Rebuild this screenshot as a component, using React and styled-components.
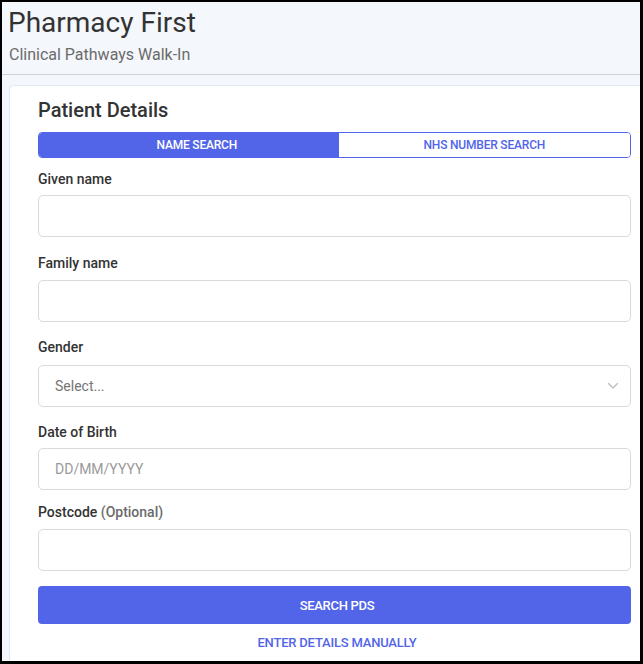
import React from 'react'
import styled, { createGlobalStyle } from 'styled-components'

const GlobalStyle = createGlobalStyle`
  html, body { margin: 0; padding: 0; background: #000; }
  body { font-family: Roboto, 'Noto Sans', Arial, sans-serif; }
  * { box-sizing: border-box; }
`

const BLUE = '#5265e9'

const Frame = styled.div`
  width: 643px;
  height: 664px;
  border-style: solid;
  border-color: #000;
  border-width: 2px 3px 3px 2px;
  background: #f4f7fb;
  overflow: hidden;
  display: flex;
  flex-direction: column;
`

const Header = styled.header`
  padding: 4px 0 0 7px;
  display: flex;
  flex-direction: column;
`

const Title = styled.h1`
  margin: 0 0 0 -1px;
  font-size: 28px;
  line-height: 34px;
  font-weight: 400;
  color: #333;
`

const Subtitle = styled.div`
  margin-top: 5px;
  font-size: 16px;
  line-height: 20px;
  color: #6b6b6b;
`

const Divider = styled.hr`
  margin: 9px 0 0;
  border: 0;
  height: 1px;
  background: #cfd3d8;
`

const Card = styled.section`
  margin: 10px 0 0 7px;
  flex: 1;
  background: #fff;
  border-top: 1px solid #e3e9f1;
  border-left: 1px solid #e3e9f1;
  border-radius: 4px 0 0 0;
  padding: 12px 9px 0 28px;
  display: flex;
  flex-direction: column;
`

const CardTitle = styled.h2`
  margin: 0;
  font-size: 20px;
  line-height: 24px;
  font-weight: 500;
  color: #333;
`

const Tabs = styled.div`
  margin-top: 10px;
  display: flex;
  height: 26px;
  border: 1px solid ${BLUE};
  border-radius: 4px;
  overflow: hidden;
`

const Tab = styled.button`
  flex: ${p => (p.$active ? '0 0 50.7%' : '1 1 0')};
  border: 0;
  margin: 0;
  padding: ${p => (p.$active ? '0 0 0 16px' : '0')};
  font-family: inherit;
  font-size: 12px;
  font-weight: 500;
  letter-spacing: -0.2px;
  text-transform: uppercase;
  background: ${p => (p.$active ? BLUE : '#fff')};
  color: ${p => (p.$active ? '#fff' : BLUE)};
  cursor: pointer;
`

const Field = styled.div`
  margin-top: ${p => p.$mt}px;
  display: flex;
  flex-direction: column;
`

const Label = styled.label`
  font-size: 14px;
  line-height: 16px;
  font-weight: 500;
  color: #333;
  margin-bottom: ${p => p.$gap}px;
`

const Optional = styled.span`
  color: #6b6b6b;
`

const Input = styled.input`
  height: 42px;
  width: 100%;
  border: 1px solid #dadada;
  border-radius: 5px;
  padding: 0 16px;
  font-family: inherit;
  font-size: 14px;
  color: #333;
  background: #fff;
  outline: none;
  &::placeholder { color: #9a9a9a; }
`

const SelectBox = styled.div`
  height: 42px;
  border: 1px solid #dadada;
  border-radius: 5px;
  padding: 0 11px 0 16px;
  display: flex;
  align-items: center;
  justify-content: space-between;
  font-size: 14px;
  color: #757575;
  background: #fff;
`

const PrimaryButton = styled.button`
  margin-top: 15px;
  height: 38px;
  border: 0;
  border-radius: 4px;
  padding: 0 0 0 5px;
  background: ${BLUE};
  color: #fff;
  font-family: inherit;
  font-size: 13px;
  font-weight: 500;
  letter-spacing: -0.3px;
  cursor: pointer;
`

const LinkButton = styled.button`
  margin-top: 11px;
  border: 0;
  background: none;
  padding: 0 0 0 5px;
  line-height: 16px;
  color: ${BLUE};
  font-family: inherit;
  font-size: 13px;
  font-weight: 500;
  letter-spacing: -0.2px;
  cursor: pointer;
`

const Chevron = () => (
  <svg width="12" height="8" viewBox="0 0 12 8" fill="none">
    <path d="M1.5 1.5 6 6l4.5-4.5" stroke="#bdbdbd" strokeWidth="1.3" strokeLinecap="round" strokeLinejoin="round" />
  </svg>
)

export default function App() {
  return (
    <>
      <GlobalStyle />
      <Frame>
        <Header>
          <Title>Pharmacy First</Title>
          <Subtitle>Clinical Pathways Walk-In</Subtitle>
        </Header>
        <Divider />
        <Card>
          <CardTitle>Patient Details</CardTitle>
          <Tabs>
            <Tab $active>Name Search</Tab>
            <Tab>NHS Number Search</Tab>
          </Tabs>

          <Field $mt={13}>
            <Label $gap={8}>Given name</Label>
            <Input type="text" />
          </Field>
          <Field $mt={18}>
            <Label $gap={9}>Family name</Label>
            <Input type="text" />
          </Field>
          <Field $mt={17}>
            <Label $gap={10}>Gender</Label>
            <SelectBox>
              <span>Select...</span>
              <Chevron />
            </SelectBox>
          </Field>
          <Field $mt={17}>
            <Label $gap={8}>Date of Birth</Label>
            <Input type="text" placeholder="DD/MM/YYYY" />
          </Field>
          <Field $mt={14}>
            <Label $gap={9}>Postcode <Optional>(Optional)</Optional></Label>
            <Input type="text" />
          </Field>

          <PrimaryButton>SEARCH PDS</PrimaryButton>
          <LinkButton>ENTER DETAILS MANUALLY</LinkButton>
        </Card>
      </Frame>
    </>
  )
}
